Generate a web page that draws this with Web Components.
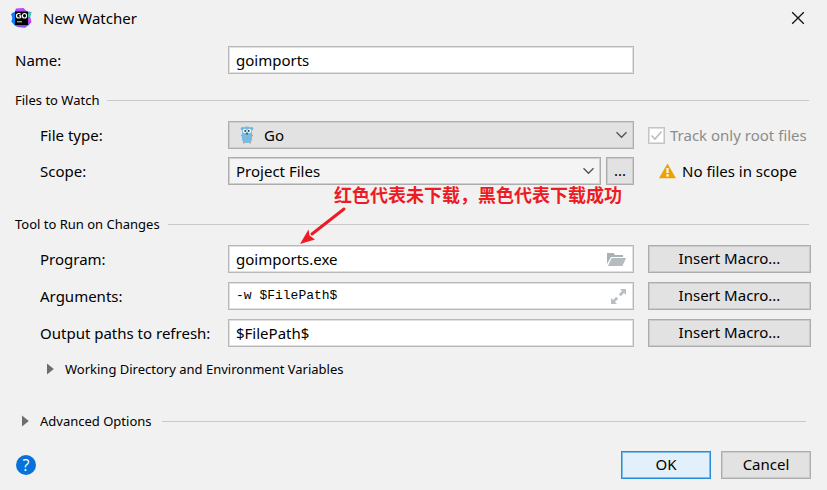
<!DOCTYPE html>
<html lang="en">
<head>
<meta charset="utf-8">
<title>New Watcher</title>
<style>
  html { height: 100%; }
  body {
    margin: 0;
    min-height: 100%;
    background: #f1f1f1;
    color: #000;
    font: 15px/20px "Noto Sans", "Open Sans", "Noto Sans CJK SC", sans-serif;
    --label-width: 213px;
    --side-width: 177px;
  }
</style>
</head>
<body>
<watcher-dialog></watcher-dialog>

<script>
const define = (name, html, init) => {
  const template = document.createElement('template');
  template.innerHTML = html;
  customElements.define(name, class extends HTMLElement {
    constructor() {
      super();
      this.attachShadow({ mode: 'open' }).append(template.content.cloneNode(true));
    }
    connectedCallback() {
      if (init) init(this, this.shadowRoot);
    }
  });
};

const rowStyle = `
  :host { display: grid; grid-template-columns: calc(var(--label-width) - var(--indent, 0px)) minmax(0, 1fr) var(--side-width); align-items: center; padding-left: var(--indent, 0px); }
  label { padding-bottom: 1px; }
  .cell { display: grid; grid-template-columns: minmax(0, 1fr); align-items: center; }
  .cell > * { grid-area: 1 / 1; }
  .side { display: flex; align-items: center; padding-left: 14px; }
  svg { display: block; pointer-events: none; }
`;

define('push-button', `
  <style>
    :host { display: grid; }
    button { box-sizing: border-box; height: 28px; padding: 0 0 2px; border: 1px solid #adadad; box-shadow: inset 0 0 0 1px #cbcbcb; background: #e2e2e2; color: inherit; font: inherit; line-height: 22px; }
    :host([primary]) button { border-color: #2a8ada; box-shadow: inset 0 0 0 1px #7dbbe9; background: #e1f0fa; }
  </style>
  <button type="button"><slot></slot></button>`);

define('text-row', `
  <style>${rowStyle}
    input { box-sizing: border-box; width: 100%; height: 28px; padding: 0 7px 1px; border: 1px solid #b8b8b8; box-shadow: inset 0 0 0 1px #e0e0e0; border-radius: 0; background: #fff; color: inherit; font: inherit; }
    :host([mono]) input { font-family: "Liberation Mono", monospace; font-size: 13px; }
    .icon { justify-self: end; margin-right: 8px; }
    .side { display: grid; }
  </style>
  <label for="field"></label>
  <div class="cell"><input id="field" type="text"><span class="icon"><slot name="icon"></slot></span></div>
  <div class="side"><slot></slot></div>`,
  (host, root) => {
    root.querySelector('label').textContent = host.getAttribute('label');
    root.querySelector('input').value = host.getAttribute('value');
  });

define('select-row', `
  <style>${rowStyle}
    .cell { flex: 1; }
    .wrap { display: flex; gap: 5px; }
    select { appearance: none; box-sizing: border-box; width: 100%; height: 28px; margin: 0; padding: 0 28px 0 7px; border: 1px solid #adadad; box-shadow: inset 0 0 0 1px #d0d0d0; border-radius: 0; background: #f4f4f4; color: inherit; font: inherit; }
    :host([filled]) select { padding-left: 35px; background: #e2e2e2; }
    .arrow { justify-self: end; margin-right: 6px; }
    .icon { margin-left: 12px; pointer-events: none; }
  </style>
  <label for="field"></label>
  <div class="wrap">
    <div class="cell">
      <select id="field"><option></option></select>
      <span class="icon"><slot name="icon"></slot></span>
      <svg class="arrow" width="13" height="8" viewBox="0 0 13 8"><path d="M1.5 1.2 6.5 6.2 11.5 1.2" fill="none" stroke="#555" stroke-width="1.4"/></svg>
    </div>
    <slot name="more"></slot>
  </div>
  <div class="side"><slot></slot></div>`,
  (host, root) => {
    root.querySelector('label').textContent = host.getAttribute('label');
    root.querySelector('option').textContent = host.getAttribute('value');
  });

define('group-title', `
  <style>
    :host { display: flex; align-items: center; gap: 8px; margin-right: 2px; font-size: 13px; }
    hr { flex: 1; margin: 0; border: 0; border-top: 1px solid #c9c9c9; }
  </style>
  <span><slot></slot></span><hr>`);

define('fold-title', `
  <style>
    :host { display: flex; align-items: center; gap: 10px; padding-left: var(--indent, 0px); margin-right: 5px; font-size: 13px; }
    button { display: flex; align-items: center; gap: 11px; padding: 0 0 0 7px; border: 0; background: none; color: inherit; font: inherit; }
    hr { flex: 1; margin: 0; border: 0; border-top: 1px solid #c9c9c9; }
    :host([plain]) hr { display: none; }
  </style>
  <button type="button" aria-expanded="false"><svg width="7" height="12" viewBox="0 0 7 12"><path d="M0 .5 6.8 6 0 11.5Z" fill="#6e6e6e"/></svg><slot></slot></button><hr>`);

define('tick-box', `
  <style>
    :host { display: block; }
    label { display: flex; align-items: center; gap: 5px; color: #8c8c8c; white-space: nowrap; }
    .box { display: grid; }
    .box > * { grid-area: 1 / 1; }
    input { appearance: none; box-sizing: border-box; width: 17px; height: 17px; margin: 0; border: 1px solid #c4c4c4; box-shadow: inset 0 0 0 1px #dedede; background: #fff; }
  </style>
  <label><span class="box"><input type="checkbox" checked disabled><svg width="17" height="17" viewBox="0 0 17 17"><path d="M3.5 8.5 7 12 13.5 4.5" fill="none" stroke="#bdbdbd" stroke-width="1.6"/></svg></span><slot></slot></label>`);

define('scope-warning', `
  <style>:host { display: flex; align-items: center; gap: 6px; margin-left: 11px; white-space: nowrap; }</style>
  <svg width="17" height="16" viewBox="0 0 17 16"><path d="M8.5.5 17 15.2H0Z" fill="#eda200"/><path d="M7.4 5h2.2v5H7.4zM7.4 11.3h2.2v2.1H7.4z" fill="#fff"/></svg>
  <slot></slot>`);

define('title-bar', `
  <style>
    :host { display: flex; align-items: center; height: 36px; padding: 0 22px 0 11px; }
    h1 { flex: 1; margin: 0 0 0 11px; font: inherit; }
    button { display: block; padding: 0; border: 0; background: none; color: inherit; }
    svg { display: block; }
  </style>
  <svg width="21" height="20" viewBox="0 0 21 20">
    <defs><linearGradient id="g" x1="0" y1="1" x2="1" y2="0"><stop offset="0" stop-color="#07a3f5"/><stop offset=".4" stop-color="#3b67f0"/><stop offset=".62" stop-color="#b74af7"/></linearGradient></defs>
    <path d="M5 .5 12.5 0 16 3.5 20.5 4 19 8 20.5 14 18 17 14 19.5 7 19 3.5 17.5.5 13.5 1.5 10 0 6 3.5 4.5Z" fill="url(#g)"/>
    <path d="M1 5 4 4V17L.5 13.5 1.5 10Z" fill="#087cfa"/><path d="M16 5 20.5 4 19 9H16Z" fill="#20d899"/>
    <path d="M4 17H17L14 19.5 7 19Z" fill="#8a4cf6"/>
    <path d="M4 3.5H17V17H4Z" fill="#000"/>
    <path d="M9.7 6.2Q8.9 5.5 7.8 5.5C4.7 5.5 4.7 10 7.8 10Q9 10 9.7 9.3V7.8H7.9" fill="none" stroke="#fff" stroke-width="1.2"/>
    <ellipse cx="13.5" cy="7.75" rx="2.1" ry="2.25" fill="none" stroke="#fff" stroke-width="1.2"/><path d="M6 13.8H11" stroke="#ddd" stroke-width="1"/>
  </svg>
  <h1><slot></slot></h1>
  <button type="button" aria-label="Close"><svg width="14" height="14" viewBox="0 0 14 14"><path d="M1.2 1.2 12.8 12.8M12.8 1.2 1.2 12.8" stroke="#111" stroke-width="1.3"/></svg></button>`);

define('red-note', `
  <style>
    :host { display: block; color: #ed1c24; font: bold 18px/22px "Noto Sans CJK SC", sans-serif; white-space: nowrap; pointer-events: none; }
    svg { display: block; margin: 1px 0 0 -34px; }
  </style>
  <slot></slot>
  <svg width="48" height="40" viewBox="0 0 48 40"><path d="M44 3 12 28" stroke="currentColor" stroke-width="3" stroke-linecap="round"/><path d="M0 38 8.5 23.5 9.5 29.5 15 33.5Z" fill="currentColor"/></svg>`);

define('dialog-footer', `
  <style>
    :host { display: flex; align-items: center; gap: 10px; padding: 20px 0 0; }
    .help { width: 20px; height: 20px; margin: 0 auto 0 1px; padding: 0; border: 0; border-radius: 50%; background: #0672d9; color: #fff; font: 16px/20px "Open Sans", sans-serif; }
    push-button { width: 90px; }
  </style>
  <button class="help" type="button" aria-label="Help">?</button>
  <push-button primary>OK</push-button><push-button>Cancel</push-button>`);

define('watcher-dialog', `
  <style>
    :host { display: block; }
    main { padding: 10px 16px 11px 15px; }
    .group { display: grid; gap: 8px; --indent: 25px; }
    group-title { margin-top: 16px; margin-bottom: 11px; }
    .tools { position: relative; gap: 9px; }
    .title-tools { margin-top: 29px; }
    .note { position: absolute; left: 319px; top: -62px; }
    .dots { width: 28px; }
    .fold { --indent: 25px; margin-top: 12px; }
    .advanced { margin-top: 32px; }
    svg { display: block; }
  </style>
  <title-bar>New Watcher</title-bar>
  <main>
    <text-row label="Name:" value="goimports"></text-row>
    <group-title>Files to Watch</group-title>
    <div class="group">
      <select-row filled label="File type:" value="Go">
        <svg slot="icon" width="14" height="18" viewBox="0 0 14 18"><circle cx="2.5" cy="2.8" r="1.8" fill="#6fb4dd"/><circle cx="11.5" cy="2.8" r="1.8" fill="#6fb4dd"/><path d="M2 5Q2 .5 7 .5T12 5V13Q12 17 7 17T2 13Z" fill="#76bbe3"/><path d="M1 9.5H2.2M11.8 9.5H13M3 16.7H4.5M9.5 16.7H11" stroke="#c39b7b" stroke-width="1.4"/><circle cx="4.7" cy="4.9" r="2" fill="#fff"/><circle cx="9.3" cy="4.9" r="2" fill="#fff"/><circle cx="5.2" cy="4.9" r=".9" fill="#222"/><circle cx="8.8" cy="4.9" r=".9" fill="#222"/><path d="M6 7h2v1.5H6z" fill="#625650"/></svg>
        <tick-box>Track only root files</tick-box>
      </select-row>
      <select-row label="Scope:" value="Project Files">
        <push-button class="dots" slot="more">...</push-button>
        <scope-warning>No files in scope</scope-warning>
      </select-row>
    </div>
    <group-title class="title-tools">Tool to Run on Changes</group-title>
    <div class="group tools">
      <red-note class="note">红色代表未下载，黑色代表下载成功</red-note>
      <text-row label="Program:" value="goimports.exe">
        <svg slot="icon" width="19" height="15" viewBox="0 0 19 15"><path d="M0 12V1H6.5L8 3H16V5H4Z" fill="#aab1b5"/><path d="M4.6 6H19L15.5 14H1Z" fill="#b5bcc0"/></svg>
        <push-button>Insert Macro...</push-button>
      </text-row>
      <text-row mono label="Arguments:" value="-w $FilePath$">
        <svg slot="icon" width="15" height="15" viewBox="0 0 15 15"><path d="M9 0h6v6l-2-2-3.2 3.2-2-2L11 2ZM0 9l2 2 3.2-3.2 2 2L4 13l2 2H0Z" fill="#b9c0c4"/></svg>
        <push-button>Insert Macro...</push-button>
      </text-row>
      <text-row label="Output paths to refresh:" value="$FilePath$">
        <push-button>Insert Macro...</push-button>
      </text-row>
    </div>
    <fold-title class="fold" plain>Working Directory and Environment Variables</fold-title>
    <fold-title class="advanced">Advanced Options</fold-title>
    <dialog-footer></dialog-footer>
  </main>`);
</script>
</body>
</html>
